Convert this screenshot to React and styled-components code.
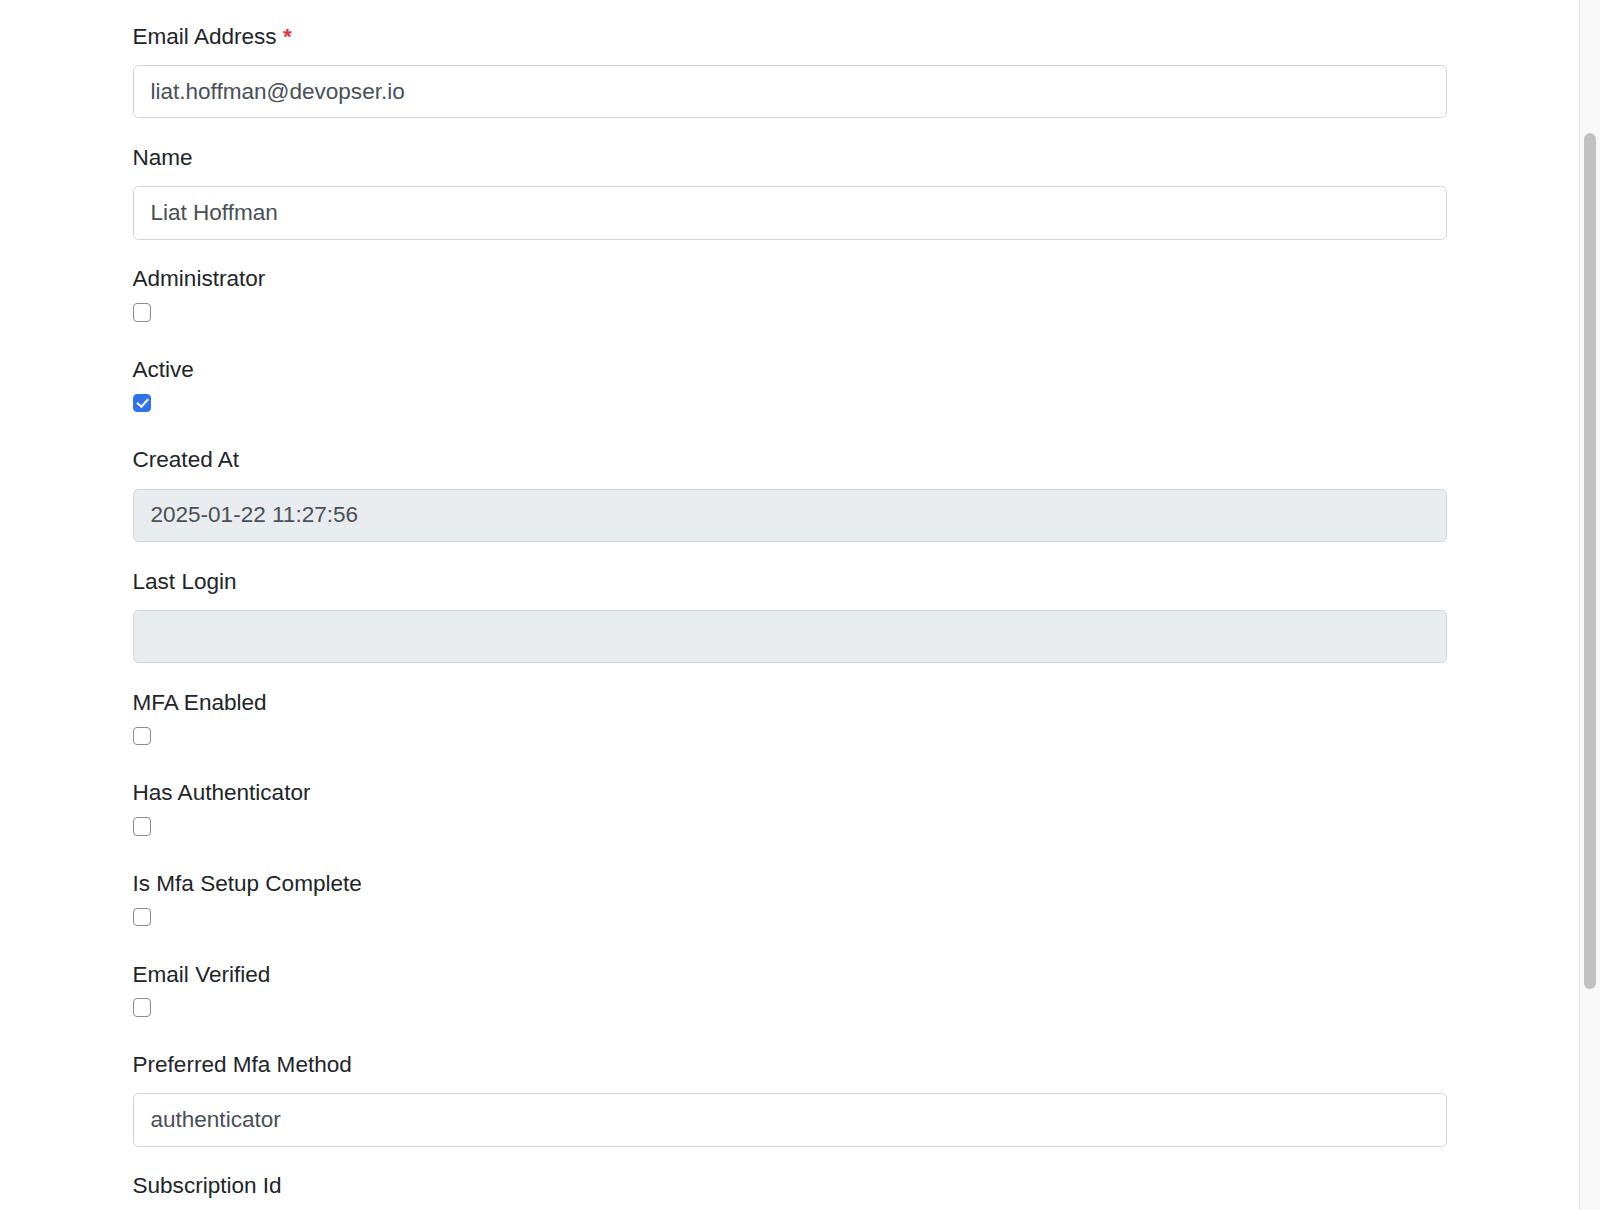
import styled, { createGlobalStyle } from "styled-components";

const GlobalStyle = createGlobalStyle`
  html, body {
    margin: 0;
    height: 100%;
    overflow: hidden;
    background: #ffffff;
  }
  * {
    box-sizing: border-box;
  }
`;

const Screen = styled.div`
  display: flex;
  height: 100vh;
  font-family: "Liberation Sans", Arial, sans-serif;
  color: #212529;
`;

const Main = styled.main`
  flex: 1;
  min-width: 0;
  overflow: hidden;
`;

const Form = styled.form`
  width: 1314px;
  margin: 0 auto;
  padding-top: 19.8px;
`;

const Group = styled.div`
  margin-bottom: 22.56px;
`;

const Label = styled.label`
  display: block;
  font-size: 22.56px;
  line-height: 33.84px;
  margin-bottom: ${(p) => (p.$tight ? "0" : "11.28px")};

  .req {
    color: #dc3545;
    font-weight: 700;
  }
`;

const Input = styled.input`
  display: block;
  width: 100%;
  height: 53.58px;
  padding: 0 16.92px;
  font-family: inherit;
  font-size: 22.56px;
  color: #495057;
  background: #ffffff;
  border: 1.41px solid #ced4da;
  border-radius: 5.64px;
  outline: none;

  &:disabled {
    background: #e9ecef;
    color: #495057;
    -webkit-text-fill-color: #495057;
    opacity: 1;
  }
`;

const CheckRow = styled.div`
  height: 34.2px;
  padding-top: 7px;
`;

const Check = styled.input.attrs({ type: "checkbox" })`
  appearance: none;
  -webkit-appearance: none;
  position: relative;
  display: block;
  width: 18.4px;
  height: 18.4px;
  margin: 0;
  border: 1.4px solid #8a8a8a;
  border-radius: 4px;
  background: #ffffff;

  &:checked {
    background: #2f72eb;
    border-color: #2f72eb;
  }

  &:checked::after {
    content: "";
    position: absolute;
    left: 5.2px;
    top: 1.6px;
    width: 4.6px;
    height: 9.4px;
    border: solid #ffffff;
    border-width: 0 2.6px 2.6px 0;
    transform: rotate(42deg);
  }
`;

const Track = styled.div`
  width: 21px;
  flex-shrink: 0;
  height: 100%;
  background: #f8f8f8;
  border-left: 1px solid #e6e6e6;
  padding: 133px 0 0 4px;
`;

const Thumb = styled.div`
  width: 12px;
  height: 856px;
  border-radius: 6px;
  background: #c1c1c1;
`;

const fields = [
  { label: "Email Address", kind: "text", value: "liat.hoffman@devopser.io", required: true },
  { label: "Name", kind: "text", value: "Liat Hoffman" },
  { label: "Administrator", kind: "check", value: false },
  { label: "Active", kind: "check", value: true },
  { label: "Created At", kind: "text", value: "2025-01-22 11:27:56", disabled: true },
  { label: "Last Login", kind: "text", value: "", disabled: true },
  { label: "MFA Enabled", kind: "check", value: false },
  { label: "Has Authenticator", kind: "check", value: false },
  { label: "Is Mfa Setup Complete", kind: "check", value: false },
  { label: "Email Verified", kind: "check", value: false },
  { label: "Preferred Mfa Method", kind: "text", value: "authenticator" },
  { label: "Subscription Id", kind: "text", value: "" },
];

const Field = ({ field }) => {
  if (field.kind === "check") {
    return (
      <Group>
        <Label $tight>{field.label}</Label>
        <CheckRow>
          <Check defaultChecked={field.value} />
        </CheckRow>
      </Group>
    );
  }
  return (
    <Group>
      <Label>
        {field.label}
        {field.required && <span className="req"> *</span>}
      </Label>
      <Input type="text" defaultValue={field.value} disabled={field.disabled} />
    </Group>
  );
};

export default function App() {
  return (
    <>
      <GlobalStyle />
      <Screen>
        <Main>
          <Form onSubmit={(e) => e.preventDefault()}>
            {fields.map((f) => (
              <Field key={f.label} field={f} />
            ))}
          </Form>
        </Main>
        <Track>
          <Thumb />
        </Track>
      </Screen>
    </>
  );
}
